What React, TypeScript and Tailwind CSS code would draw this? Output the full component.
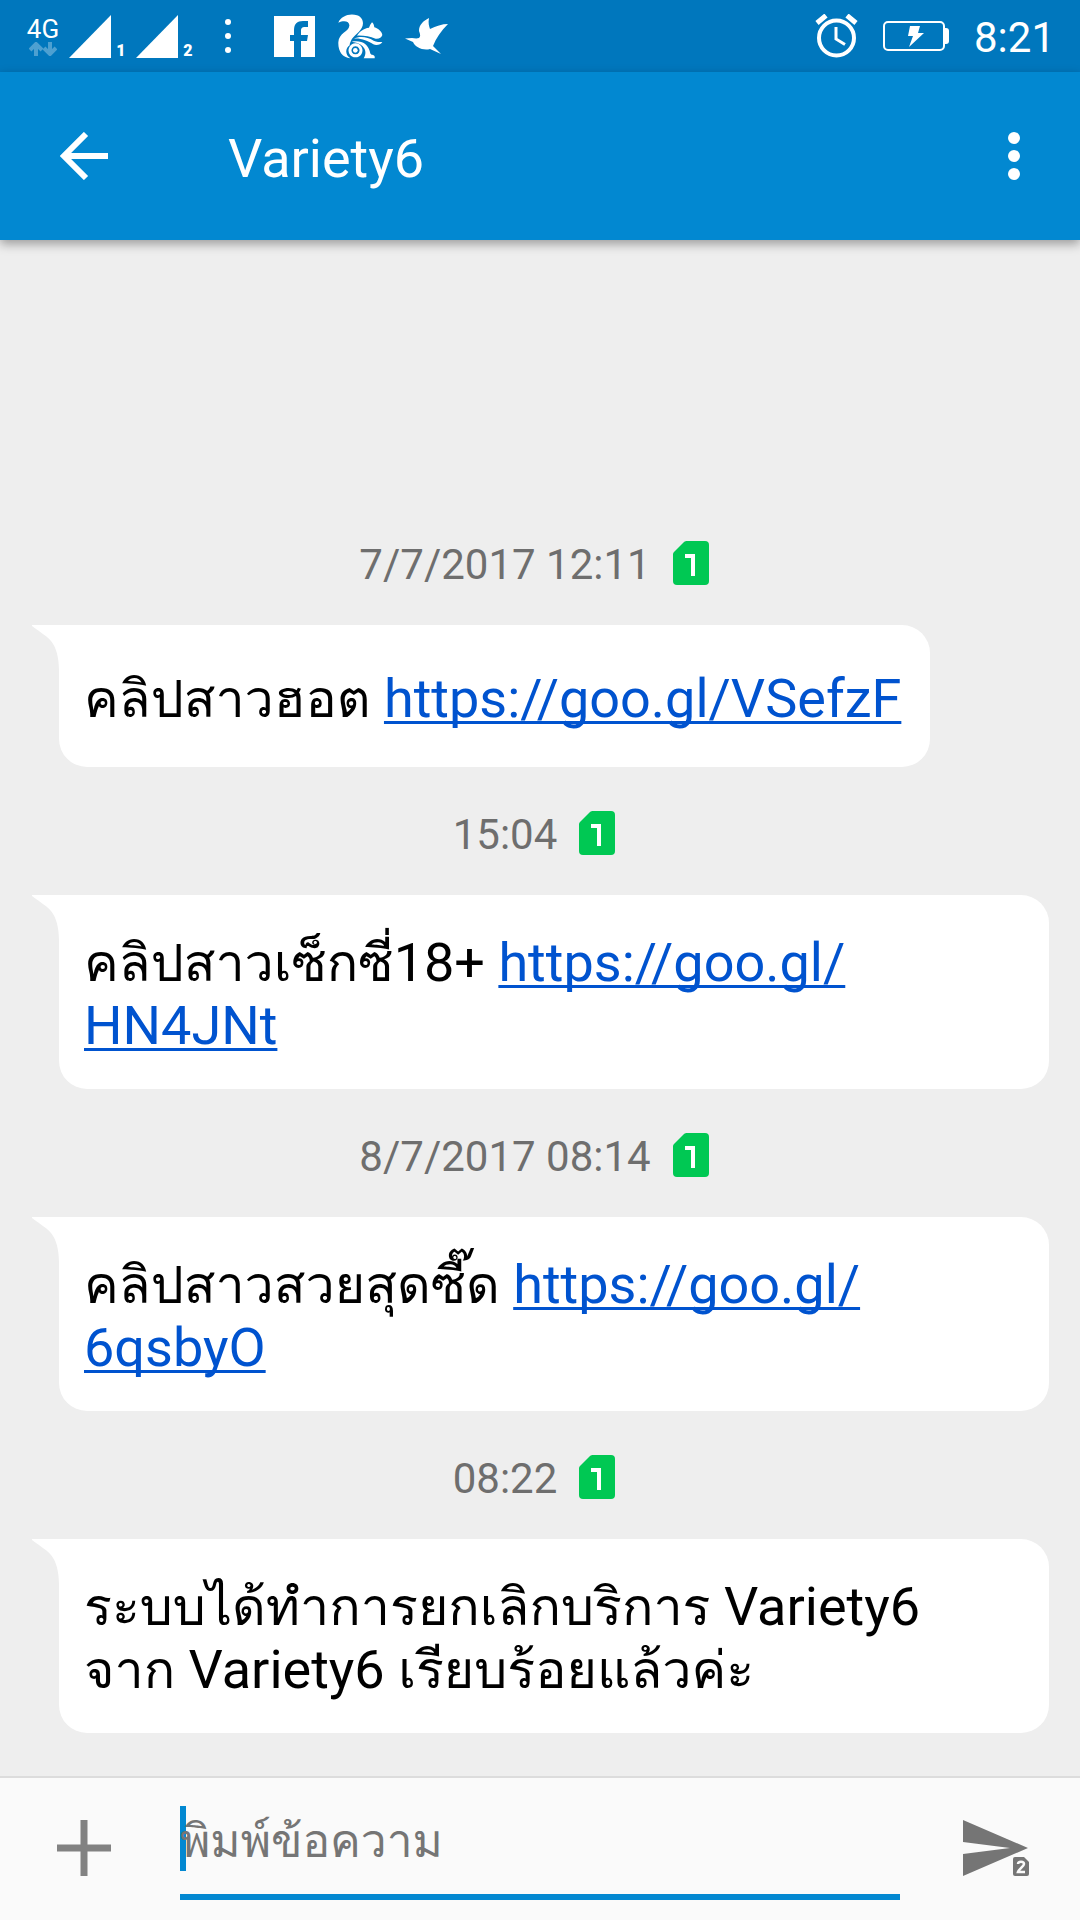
import type { ReactNode } from 'react'

type Message = {
  id: number
  time: string
  body: ReactNode
}

function Link({ href, children }: { href: string; children: ReactNode }) {
  return (
    <a
      href={href}
      className="text-[#0053cf] underline decoration-[3px] underline-offset-[4px] [text-decoration-skip-ink:none]"
    >
      {children}
    </a>
  )
}

function Thai({ children }: { children: ReactNode }) {
  return <span lang="th" className="text-[52px] leading-none">{children}</span>
}

const messages: Message[] = [
  {
    id: 1,
    time: '7/7/2017 12:11',
    body: <><Thai>คลิปสาวฮอต</Thai> <Link href="https://goo.gl/VSefzF">https://goo.gl/VSefzF</Link></>,
  },
  {
    id: 2,
    time: '15:04',
    body: <><Thai>คลิปสาวเซ็กซี่</Thai>18+ <Link href="https://goo.gl/HN4JNt">https://goo.gl/<wbr />HN4JNt</Link></>,
  },
  {
    id: 3,
    time: '8/7/2017 08:14',
    body: <><Thai>คลิปสาวสวยสุดซี๊ด</Thai> <Link href="https://goo.gl/6qsbyO">https://goo.gl/<wbr />6qsbyO</Link></>,
  },
  {
    id: 4,
    time: '08:22',
    body: (
      <>
        <Thai>ระบบได้ทำการยกเลิกบริการ</Thai> Variety6{' '}
        <span className="whitespace-nowrap"><Thai>จาก</Thai> Variety6</span> <Thai>เรียบร้อยแล้วค่ะ</Thai>
      </>
    ),
  },
]

function Signal({ sim }: { sim: string }) {
  return (
    <span className="flex items-end gap-1">
      <svg className="h-[43px] w-[42px]" viewBox="0 0 42 43" fill="currentColor">
        <path d="M42 0v43H0z" />
      </svg>
      <span className="w-3 text-center text-base leading-[14px] font-black">{sim}</span>
    </span>
  )
}

function Squirrel() {
  return (
    <svg className="h-[45px] w-[45px]" viewBox="293 40 135 135" fill="currentColor">
      <path d="M294 66C302 46 328 37 350 44c18 6 22 24 14 38-8 15-26 24-32 38-3 6-4 10-4 14-14 10-14 28 2 39-24-2-37-22-36-48 1-29 31-31 33-50 1-12-14-18-33-9z" />
      <path d="M350 105c8-13 20-22 36-24 2-6 5-11 9-16 5 4 6 10 7 15 12 4 22 12 24 23-2 8-10 12-20 11-18-6-36-10-56-9z" />
      <path d="M339 114c22-9 42-5 61 6 8 4 18 4 26 4-4 8-18 12-27 7-18-11-36-19-60-17z" />
      <path d="M334 123c30-6 49 8 54 28 2 10 4 11 10 12 5 1 6 5 5 10h-33c12-18 6-44-36-50z" />
      <path
        fillRule="evenodd"
        d="M346 128a21 21 0 1 1-1 0zm-1 9a12 12 0 1 0 1 0z"
      />
      <circle cx="345" cy="149" r="7" />
    </svg>
  )
}

function StatusBar() {
  return (
    <div className="flex h-[72px] shrink-0 items-center justify-between bg-[#0077bd] pr-[25px] pl-[27px]">
      <div className="flex items-center">
        <div className="flex w-[32px] flex-col items-center">
          <span className="text-[26px] leading-[26px] font-normal">4G</span>
          <svg className="h-[14px] w-[28px] opacity-30" viewBox="0 0 28 14" fill="none" stroke="currentColor" strokeWidth="4">
            <path d="M7 14V3M1 8l6-6 6 6M21 0v11M15 6l6 6 6-6" />
          </svg>
        </div>
        <div className="ml-[10px] flex gap-[9px]">
          <Signal sim="1" />
          <Signal sim="2" />
        </div>
        <svg className="ml-[31px] h-[34px] w-[6px]" viewBox="0 0 6 34" fill="currentColor">
          <circle cx="3" cy="3" r="3" />
          <circle cx="3" cy="17" r="3" />
          <circle cx="3" cy="31" r="3" />
        </svg>
        <svg className="ml-[43px] h-[41px] w-[41px]" viewBox="0 0 41 41" fill="currentColor">
          <path d="M0 0h41v41H27V25h6l1-6h-7v-4c0-3 1-4 4-4h3V5h-5c-6 0-9 3-9 9v5h-4v6h4v16H0z" />
        </svg>
        <span className="ml-[23px]">
          <Squirrel />
        </span>
        <svg className="ml-[22px] h-[37px] w-[44px]" viewBox="0 0 44 37" fill="currentColor">
          <path d="M0 20.500l7-.5c2 0 4 1 7 0 2-2 1-4 0-7 0-6 4-10 10-13-1 5 0 8 1 11 6-3 12-5 18-5-7 7-12 14-15 22l8 8-11-5c-7 2-15-2-17-7z" />
        </svg>
      </div>
      <div className="flex items-center">
        <svg className="h-[44px] w-[43px]" viewBox="0 0 43 44" fill="none" stroke="currentColor">
          <circle cx="21.500" cy="24" r="17.500" strokeWidth="4" />
          <path d="M21 13v12l9 5.500" strokeWidth="3" />
          <path d="M2 9l9-7.500M41 9l-9-7.500" strokeWidth="5" />
        </svg>
        <svg className="ml-[25px] h-[30px] w-[66px]" viewBox="0 0 66 30" fill="currentColor">
          <rect x="1" y="1" width="60" height="28" rx="4" fill="none" stroke="currentColor" strokeWidth="2" />
          <path d="M61 7h2c2 0 3 1 3 3v10c0 2-1 3-3 3h-2z" />
          <path d="M27 5h10l-2 7h6L26 26l4-11h-5z" />
        </svg>
        <time className="ml-[25px] pt-[3px] text-[42px] leading-[48px]">8:21</time>
      </div>
    </div>
  )
}

function SimBadge() {
  return (
    <svg role="img" aria-label="SIM 1" className="h-[44px] w-[36px]" viewBox="0 0 36 44">
      <path fill="#00c853" d="M14 0h18a4 4 0 0 1 4 4v36a4 4 0 0 1-4 4H4a4 4 0 0 1-4-4V14c0-1 0-2 1-3L11 1c1-1 2-1 3-1z" />
      <path fill="none" stroke="#fff" strokeWidth="4" d="M12 15h8v20" />
    </svg>
  )
}

function Bubble({ children }: { children: ReactNode }) {
  return (
    <div className="relative mr-[31px] ml-[59px] flex min-h-[142px] w-fit items-center rounded-[28px] rounded-tl-none bg-white pt-[36px] pr-[29px] pb-[32px] pl-[25px]">
      {/* Tail */}
      <svg className="absolute top-0 -left-[27px] h-[46px] w-[28px]" viewBox="0 0 28 46" fill="#fff">
        <path d="M0 0h28v46h-1C27 32 24 22 19 16 14 10 6 6 0 1z" />
      </svg>
      <p className="text-[54px] leading-[63px] text-black">{children}</p>
    </div>
  )
}

export default function App() {
  return (
    <div className="flex min-h-screen flex-col bg-[#eeeeee] font-[Roboto,Loma,sans-serif] text-white">
      <StatusBar />

      <header className="relative flex h-[168px] shrink-0 items-center bg-[#0288d1] pr-[60px] pl-[60px] shadow-[0_4px_10px_rgba(0,0,0,0.35)]">
        <button type="button" aria-label="Back">
          <svg className="h-[48px] w-[48px]" viewBox="0 0 48 48" fill="none" stroke="currentColor" strokeWidth="6">
            <path d="M48 24H5M26 2L4 24l22 22" />
          </svg>
        </button>
        <h1 className="ml-[120px] flex-1 pt-[6px] text-[54px] leading-[64px]">Variety6</h1>
        <button type="button" aria-label="More options">
          <svg className="h-[48px] w-[12px]" viewBox="0 0 12 48" fill="currentColor">
            <circle cx="6" cy="6" r="6" />
            <circle cx="6" cy="24" r="6" />
            <circle cx="6" cy="42" r="6" />
          </svg>
        </button>
      </header>

      <main className="flex flex-1 flex-col justify-end pb-[43px]">
        {messages.map((m) => (
          <section key={m.id}>
            <div className="flex h-[128px] items-center justify-center gap-[22px] pt-1 pr-3 text-[42px] text-[#6e6e6e]">
              <time className="pt-[3px]">{m.time}</time>
              <SimBadge />
            </div>
            <Bubble>{m.body}</Bubble>
          </section>
        ))}
      </main>

      <form className="flex h-[144px] shrink-0 items-center border-t-2 border-[#dcdcdc] bg-[#fafafa] pr-[51px] pb-[2px] pl-[56px]">
        <button type="button" aria-label="Attach" className="text-[#828282]">
          <svg className="h-[56px] w-[56px]" viewBox="0 0 56 56" fill="none" stroke="currentColor" strokeWidth="7">
            <path d="M28 0v56M1 28h54" />
          </svg>
        </button>
        <div className="relative ml-[68px] flex-1 self-stretch pt-[18px] pb-[18px]">
          {/* Caret */}
          <span className="absolute top-[28px] left-0 h-[65px] w-[6px] bg-[#0288d1]" />
          <input
            type="text"
            aria-label="พิมพ์ข้อความ"
            placeholder="พิมพ์ข้อความ"
            className="relative h-full w-full border-b-[6px] border-[#0288d1] bg-transparent pb-2 text-[46px] text-black outline-none placeholder:text-[#757575]"
          />
        </div>
        <button type="submit" aria-label="Send" className="ml-[63px] text-[#757575]">
          <svg className="h-[56px] w-[66px]" viewBox="0 0 66 56" fill="currentColor">
            <path d="M0 0l65 28L0 56V34l47-6L0 22z" />
            <path d="M53 37h8l5 5v12a2 2 0 0 1-2 2H52a2 2 0 0 1-2-2V39a2 2 0 0 1 2-2z" />
            <path fill="none" stroke="#fafafa" strokeWidth="2.500" d="M55 44c0-3 6-3 6 0 0 2-5 5-6 8h7" />
          </svg>
        </button>
      </form>
    </div>
  )
}
